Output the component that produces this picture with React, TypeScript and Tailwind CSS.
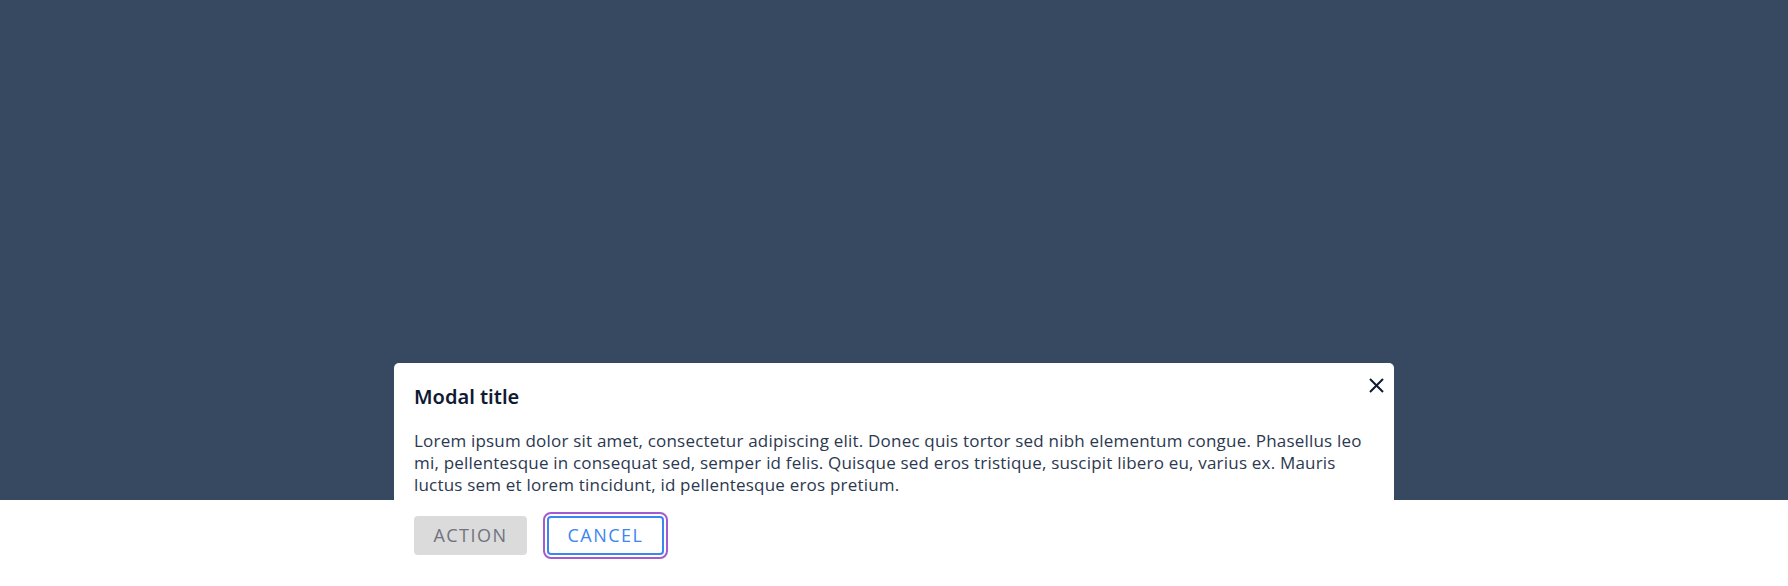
import React from "react";

export default function App() {
  return (
    <div className="relative h-[586px] w-full bg-white" style={{ fontFamily: '"Open Sans", "Noto Sans", sans-serif' }}>
      <div className="h-[500px] w-full bg-[#374861]" />
      <div className="absolute left-1/2 top-[363px] w-[1000px] -translate-x-1/2 rounded-t-[5px] bg-white px-5 pb-5 pt-[22px]">
        <button className="absolute right-[10px] top-[14px] flex h-[16px] w-[16px] items-center justify-center text-[#111a33]" aria-label="close">
          <svg width="15" height="15" viewBox="0 0 15 15" fill="none" stroke="currentColor" strokeWidth="2">
            <path d="M1 1L14 14M14 1L1 14" />
          </svg>
        </button>
        <h2 className="m-0 text-[20px] font-semibold leading-[24px] text-[#0f1a33]" style={{ fontFamily: '"Noto Sans", "Open Sans", sans-serif' }}>Modal title</h2>
        <p className="mt-[21px] text-[17px] leading-[22px] tracking-[0.2px] text-[#2b3850]">
          Lorem ipsum dolor sit amet, consectetur adipiscing elit. Donec quis tortor sed nibh elementum congue. Phasellus leo mi, pellentesque in consequat sed, semper id felis. Quisque sed eros tristique, suscipit libero eu, varius ex. Mauris luctus sem et lorem tincidunt, id pellentesque eros pretium.
        </p>
        <div className="mt-[20px] flex items-center gap-5">
          <button className="flex h-[39px] w-[113px] items-center justify-center rounded-[4px] bg-[#dbdbdb] text-[18px] tracking-[1.5px] text-[#6f7380]">
            ACTION
          </button>
          <button className="flex h-[39px] w-[117px] items-center justify-center rounded-[4px] border-2 border-[#3b86f0] bg-white text-[18px] tracking-[1.5px] text-[#3b86f0] outline outline-2 outline-offset-[2px] outline-[#a45ad0]">
            CANCEL
          </button>
        </div>
      </div>
    </div>
  );
}
